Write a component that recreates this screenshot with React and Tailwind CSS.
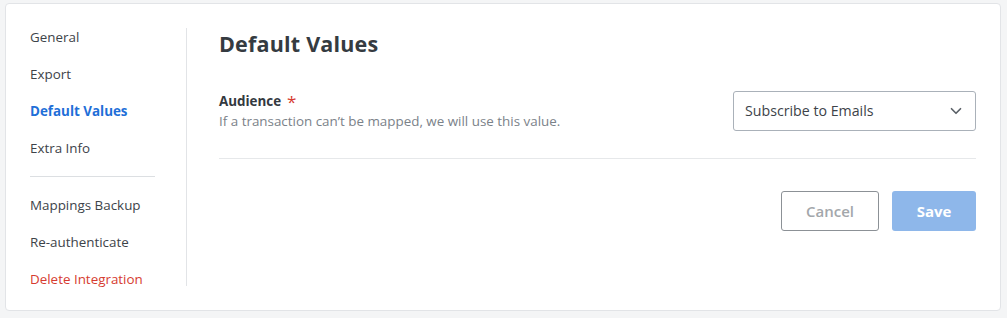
import React from 'react';
import { ChevronDown } from 'lucide-react';

const navTop = ['General', 'Export', 'Default Values', 'Extra Info'];
const navBottom = ['Mappings Backup', 'Re-authenticate', 'Delete Integration'];

function NavItem({ label }) {
  let color = 'text-[#3d4349]';
  if (label === 'Default Values') color = 'text-[#1f6fd8] font-bold';
  if (label === 'Delete Integration') color = 'text-[#d63b30]';
  return <a className={`block leading-[18px] text-[13.4px] cursor-pointer ${color}`}>{label}</a>;
}

export default function App() {
  return (
    <div className="h-[318px] bg-[#f4f5f6] pt-[3px] pl-[5px]" style={{ fontFamily: '"Open Sans", Lato, sans-serif' }}>
      <div className="w-[996px] h-[308px] bg-white border border-[#e2e4e7] rounded-[4px] flex py-6">
        <nav className="w-[181px] border-r border-[#e2e4e7] pl-6 flex flex-col gap-[19px]">
          {navTop.map((n) => <NavItem key={n} label={n} />)}
          <div className="w-[125px] shrink-0 border-t border-[#dcdfe2]" />
          {navBottom.map((n) => <NavItem key={n} label={n} />)}
        </nav>

        <main className="flex-1 ml-8 mr-6">
          <h1 className="text-[21.5px] leading-8 font-bold text-[#353b41] tracking-[0.2px]">Default Values</h1>

          <div className="mt-[30px] flex items-center justify-between">
            <div>
              <p className="text-[13.4px] leading-[18px] font-bold text-[#33393f] flex items-center">
                Audience <span className="text-[#d63b30] font-normal text-[17px] leading-[18px] ml-[6px] mt-[3px]">*</span>
              </p>
              <p className="text-[13.4px] leading-[20px] text-[#7b8289]">If a transaction can’t be mapped, we will use this value.</p>
            </div>
            <button className="w-[243px] h-10 border border-[#aab1b9] rounded-[3px] pl-[11px] pr-[10px] flex items-center justify-between text-[14.2px] text-[#3d4349]">
              Subscribe to Emails
              <ChevronDown size={18} strokeWidth={2.25} className="text-[#5b6168]" />
            </button>
          </div>

          <div className="mt-[27px] border-t border-[#e6e8ea]" />

          <div className="mt-8 flex justify-end gap-[13px]">
            <button className="w-[98px] h-10 border border-[#8c9196] rounded-[3px] text-[15px] font-semibold text-[#a3a7ab]">Cancel</button>
            <button className="w-[84px] h-10 rounded-[3px] bg-[#8eb7ea] text-[15px] font-bold text-white">Save</button>
          </div>
        </main>
      </div>
    </div>
  );
}
